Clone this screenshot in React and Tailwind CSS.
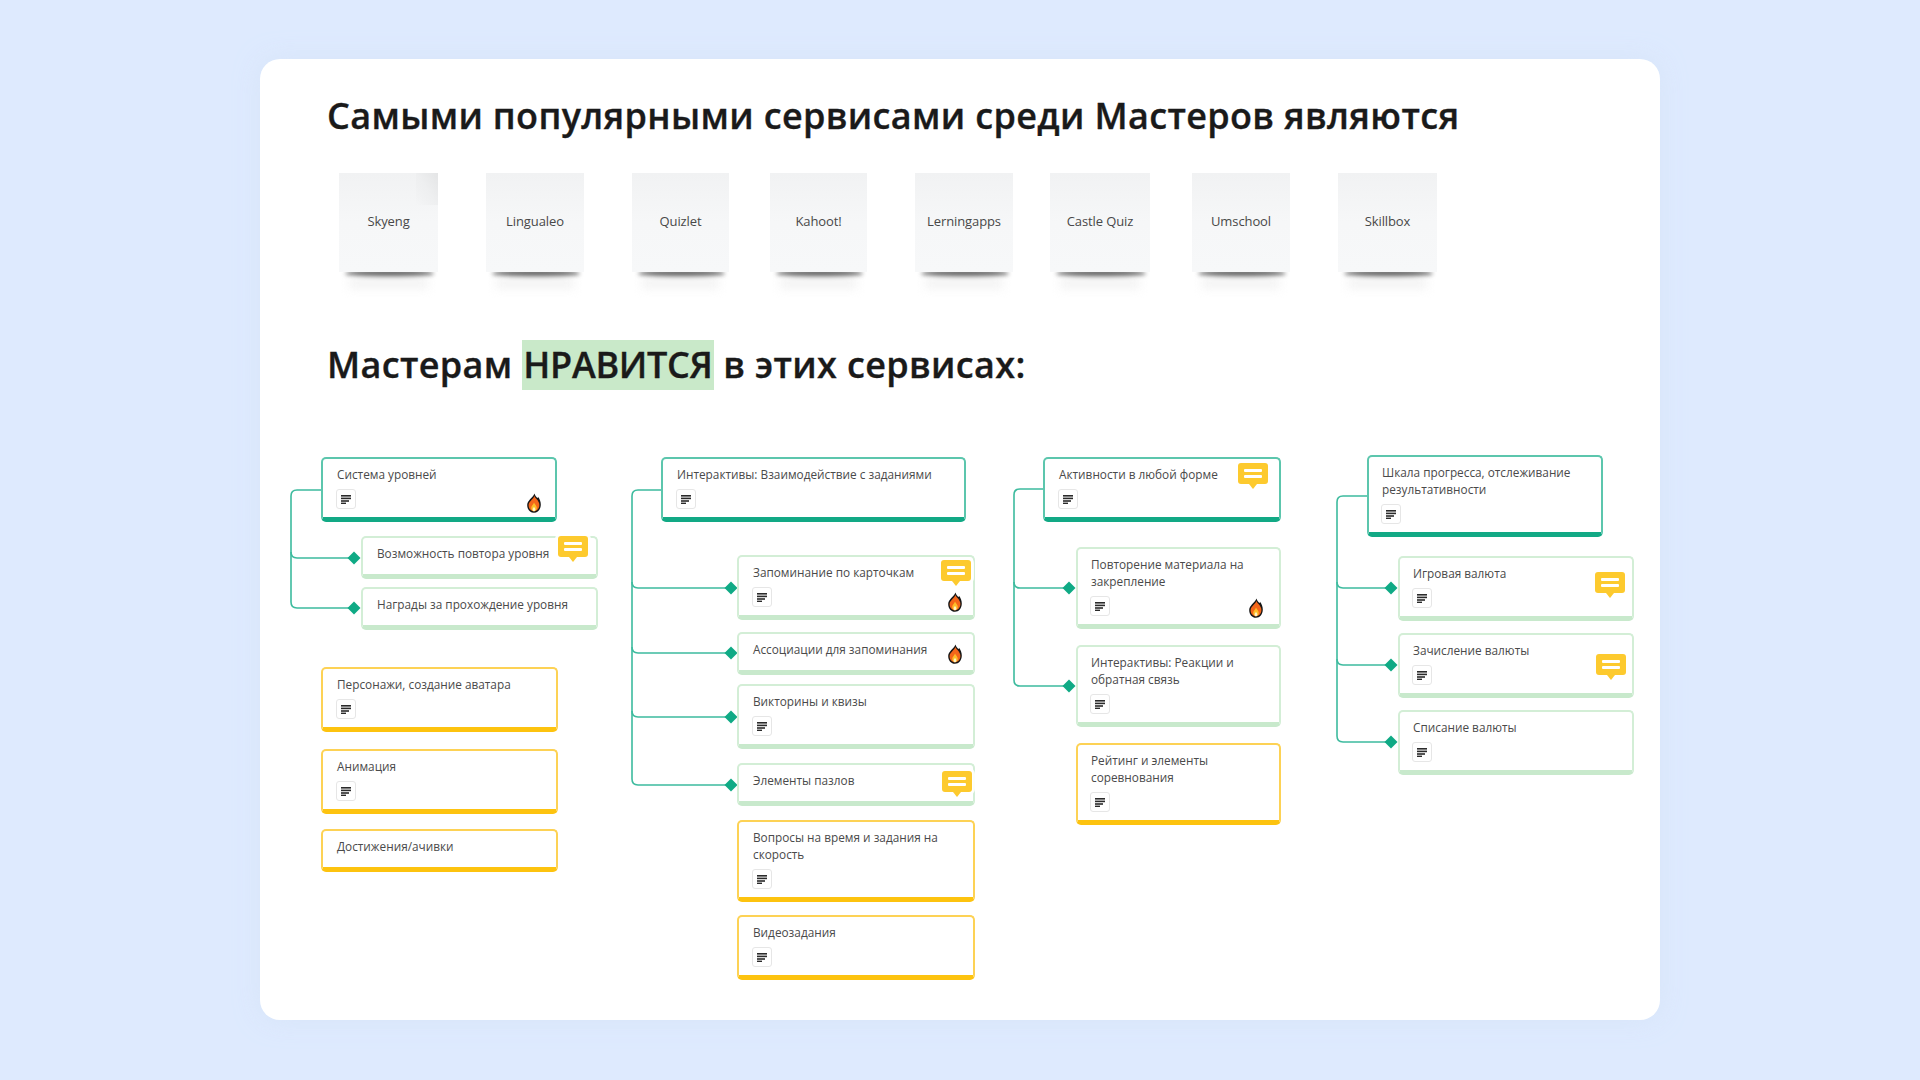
const stickies = [
  { t: "Skyeng", w: "w-[99px]", ml: "ml-0", fold: true },
  { t: "Lingualeo", w: "w-[98px]", ml: "ml-[48px]" },
  { t: "Quizlet", w: "w-[97px]", ml: "ml-[48px]" },
  { t: "Kahoot!", w: "w-[97px]", ml: "ml-[41px]" },
  { t: "Lerningapps", w: "w-[98px]", ml: "ml-[48px]" },
  { t: "Castle Quiz", w: "w-[100px]", ml: "ml-[37px]" },
  { t: "Umschool", w: "w-[98px]", ml: "ml-[42px]" },
  { t: "Skillbox", w: "w-[99px]", ml: "ml-[48px]" },
];

function Sticky({ t, w, ml, fold }) {
  return (
    <div className={`relative h-[99px] ${w} ${ml}`}>
      <div className="absolute left-[6px] right-[4px] bottom-[-5px] h-[7px] rounded-[50%] bg-[#555555] blur-[2px]" />
      <div className="absolute left-[10px] right-[10px] bottom-[-17px] h-[12px] bg-[#efefef] blur-[5px] opacity-70" />
      <div className="relative h-full w-full bg-linear-to-b from-[#f1f2f3] via-[#f6f7f8] to-[#f7f8f9] flex items-center justify-center pb-[1px] text-[13px] tracking-[-0.1px] text-[#484848]">
        {t}
        {fold && <div className="absolute top-0 right-0 w-[22px] h-[32px] bg-linear-to-bl from-[#e4e5e6] via-[#eeeff0] to-transparent" />}
      </div>
    </div>
  );
}

function NoteIcon() {
  return (
    <div className="mt-[6px] ml-[-1px] w-[20px] h-[20px] rounded-[3px] border border-[#e6e6e6] bg-white flex items-center justify-center">
      <svg width="10" height="9" viewBox="0 0 10 9" fill="#2b2b2b">
        <rect x="0" y="0" width="10" height="1.6" />
        <rect x="0" y="2.6" width="10" height="1.6" />
        <rect x="0" y="5.2" width="8" height="1.6" />
        <rect x="0" y="7.6" width="5" height="1.4" />
      </svg>
    </div>
  );
}

function Bubble({ pos }) {
  return (
    <div className={`absolute ${pos} w-[30px] h-[21px] rounded-[3px] bg-[#fdca2e] shadow-[0_0_0_3px_rgba(255,255,255,0.9)] flex flex-col items-center justify-center gap-[3px]`}>
      <div className="w-[18px] h-[3px] rounded-[1px] bg-white" />
      <div className="w-[18px] h-[3px] rounded-[1px] bg-white" />
      <div className="absolute left-[11px] bottom-[-5px] w-0 h-0 border-l-[4px] border-r-[4px] border-t-[5px] border-l-transparent border-r-transparent border-t-[#fdca2e]" />
    </div>
  );
}

function Fire({ pos }) {
  return (
    <svg className={`absolute ${pos}`} width="14" height="20" viewBox="0 0 14 18" preserveAspectRatio="none">
      <path d="M7.5 0.4 C8 2.6 9.5 3.2 10.5 4.6 C11 4.2 11 3.8 11 3.4 C12.8 5.4 13.8 7.8 13.8 10.4 C13.8 14.8 10.8 17.8 7 17.8 C3.2 17.8 0.2 15 0.2 10.8 C0.2 6.6 5.4 4.8 7.5 0.4 Z" fill="#161616" />
      <path d="M7.6 2.8 C8 4.6 10 5.8 10.8 6.8 C11.4 7.8 12.4 9 12.4 10.8 C12.4 14 10 16.4 7 16.4 C4 16.4 1.6 14.2 1.6 11 C1.6 8 5.8 6 7.6 2.8 Z" fill="#f4661a" />
      <path d="M7 8.6 C7.6 10.4 9.8 11.4 9.8 13.6 C9.8 15.2 8.4 16.4 7 16.4 C5.6 16.4 4.2 15.2 4.2 13.6 C4.2 11.6 6.4 10.6 7 8.6 Z" fill="#fdbe2a" />
      <path d="M7 12.4 C7.4 13.2 8.4 13.8 8.4 14.8 C8.4 15.7 7.7 16.4 7 16.4 C6.3 16.4 5.6 15.7 5.6 14.8 C5.6 13.8 6.6 13.2 7 12.4 Z" fill="#fff3c4" />
    </svg>
  );
}

const tone = {
  teal: "border-[#5cc6ad] border-b-[#12a985]",
  green: "border-[#d3eed6] border-b-[#c8e9cc]",
  yellow: "border-[#fdd255] border-b-[#fdc30f]",
};

function Node({ text, color, box, note = true, bubble, fire, tight = false }) {
  return (
    <div className={`relative rounded-[5px] border-2 border-b-[5px] bg-white pt-[7px] text-[11.8px] leading-[17px] text-[#4a4a4a] ${tight ? "pl-[13px]" : "pl-[14px]"} ${note ? "pb-[8px]" : "pb-[12px]"} ${tone[color]} ${box}`}>
      <div>{text}</div>
      {note && <NoteIcon />}
      {bubble && <Bubble pos={bubble} />}
      {fire && <Fire pos={fire} />}
    </div>
  );
}

function Links({ rootX, rootY, diamondX, ys }) {
  const last = ys[ys.length - 1];
  const r = 6;
  const tealPath = `M${rootX} ${rootY} H${r} Q0 ${rootY} 0 ${rootY + r} V${last - r} Q0 ${last} ${r} ${last} H${diamondX}`;
  return (
    <svg className="absolute left-0 top-0 overflow-visible" width="1" height="1">
      <path d={tealPath} fill="none" stroke="#3dbb9e" strokeWidth="1.6" />
      {ys.slice(0, -1).map((y) => (
        <path key={y} d={`M0 ${y - r} Q0 ${y} ${r} ${y} H${diamondX}`} fill="none" stroke="#3dbb9e" strokeWidth="1.6" />
      ))}
      {ys.map((y) => (
        <polygon key={y} points={`${diamondX},${y - 6.5} ${diamondX + 6.5},${y} ${diamondX},${y + 6.5} ${diamondX - 6.5},${y}`} fill="#0faa85" />
      ))}
    </svg>
  );
}

export default function App() {
  return (
    <div className="w-[1920px] h-[1080px] overflow-hidden bg-[#deeafe] pt-[59px] pl-[260px] font-['Open_Sans','Noto_Sans',sans-serif]">
      <div className="w-[1400px] h-[961px] rounded-[20px] bg-white shadow-[0_0_24px_rgba(210,225,245,0.6)] pt-[32px]">
        <h1 className="pl-[67px] text-[36px] leading-[50px] font-semibold tracking-[0.35px] [-webkit-text-stroke:0.35px_#1a1a1a] text-[#1a1a1a]">
          Самыми популярными сервисами среди Мастеров являются
        </h1>

        <div className="mt-[32px] pl-[79px] flex">
          {stickies.map((s) => (
            <Sticky key={s.t} {...s} />
          ))}
        </div>

        <h2 className="mt-[68px] pl-[67px] text-[36px] leading-[50px] font-semibold tracking-[0.35px] [-webkit-text-stroke:0.35px_#1a1a1a] text-[#1a1a1a]">
          Мастерам <span className="inline-block bg-[#c9e9c9] px-[1px] tracking-[-0.3px]">НРАВИТСЯ</span> в этих сервисах:
        </h2>

        <div className="mt-[65px] flex items-start">
          {/* Column 1 */}
          <div className="relative ml-[31px] mt-[2px] w-[307px]">
            <Links rootX={30} rootY={33} diamondX={63} ys={[101, 151]} />
            <Node text="Система уровней" color="teal" box="ml-[30px] w-[236px]" fire="right-[14px] bottom-[4px]" />
            <Node text="Возможность повтора уровня" color="green" note={false} box="ml-[70px] w-[237px] mt-[14px]" bubble="right-[8px] top-[-2px]" />
            <Node text="Награды за прохождение уровня" color="green" note={false} box="ml-[70px] w-[237px] mt-[8px]" />
            <Node text="Персонажи, создание аватара" color="yellow" box="ml-[30px] w-[237px] mt-[37px]" />
            <Node text="Анимация" color="yellow" box="ml-[30px] w-[237px] mt-[17px]" />
            <Node text="Достижения/ачивки" color="yellow" note={false} box="ml-[30px] w-[237px] mt-[15px]" />
          </div>

          {/* Column 2 */}
          <div className="relative ml-[34px] mt-[2px] w-[343px]">
            <Links rootX={29} rootY={33} diamondX={99} ys={[131, 196, 260, 328]} />
            <Node text="Интерактивы: Взаимодействие с заданиями" color="teal" box="ml-[29px] w-[305px]" />
            <Node text="Запоминание по карточкам" color="green" box="ml-[105px] w-[238px] mt-[33px]" bubble="right-[2px] top-[3px]" fire="right-[11px] bottom-[3px]" />
            <Node text="Ассоциации для запоминания" color="green" note={false} box="ml-[105px] w-[238px] mt-[12px]" fire="right-[11px] bottom-[6px]" />
            <Node text="Викторины и квизы" color="green" box="ml-[105px] w-[238px] mt-[9px]" />
            <Node text="Элементы пазлов" color="green" note={false} box="ml-[105px] w-[238px] mt-[14px]" bubble="right-[1px] top-[6px]" />
            <Node text="Вопросы на время и задания на скорость" color="yellow" box="ml-[105px] w-[238px] mt-[14px] pr-[20px]" />
            <Node text="Видеозадания" color="yellow" box="ml-[105px] w-[238px] mt-[13px]" />
          </div>

          {/* Column 3 */}
          <div className="relative ml-[39px] mt-[2px] w-[267px]">
            <Links rootX={29} rootY={32} diamondX={55} ys={[131, 229]} />
            <Node text="Активности в любой форме" color="teal" box="ml-[29px] w-[238px]" bubble="right-[11px] top-[4px]" />
            <Node tight text="Повторение материала на закрепление" color="green" box="ml-[62px] w-[205px] mt-[25px] pr-[25px]" fire="right-[16px] bottom-[6px]" />
            <Node tight text="Интерактивы: Реакции и обратная связь" color="green" box="ml-[62px] w-[205px] mt-[16px] pr-[25px]" />
            <Node tight text="Рейтинг и элементы соревнования" color="yellow" box="ml-[62px] w-[205px] mt-[16px] pr-[25px]" />
          </div>

          {/* Column 4 */}
          <div className="relative ml-[56px] w-[297px]">
            <Links rootX={30} rootY={41} diamondX={54} ys={[133, 210, 287]} />
            <Node tight text="Шкала прогресса, отслеживание результативности" color="teal" box="ml-[30px] w-[236px] pr-[20px]" />
            <Node tight text="Игровая валюта" color="green" box="ml-[61px] w-[236px] mt-[19px]" bubble="right-[7px] top-[14px]" />
            <Node tight text="Зачисление валюты" color="green" box="ml-[61px] w-[236px] mt-[12px]" bubble="right-[6px] top-[19px]" />
            <Node tight text="Списание валюты" color="green" box="ml-[61px] w-[236px] mt-[12px]" />
          </div>
        </div>
      </div>
    </div>
  );
}
